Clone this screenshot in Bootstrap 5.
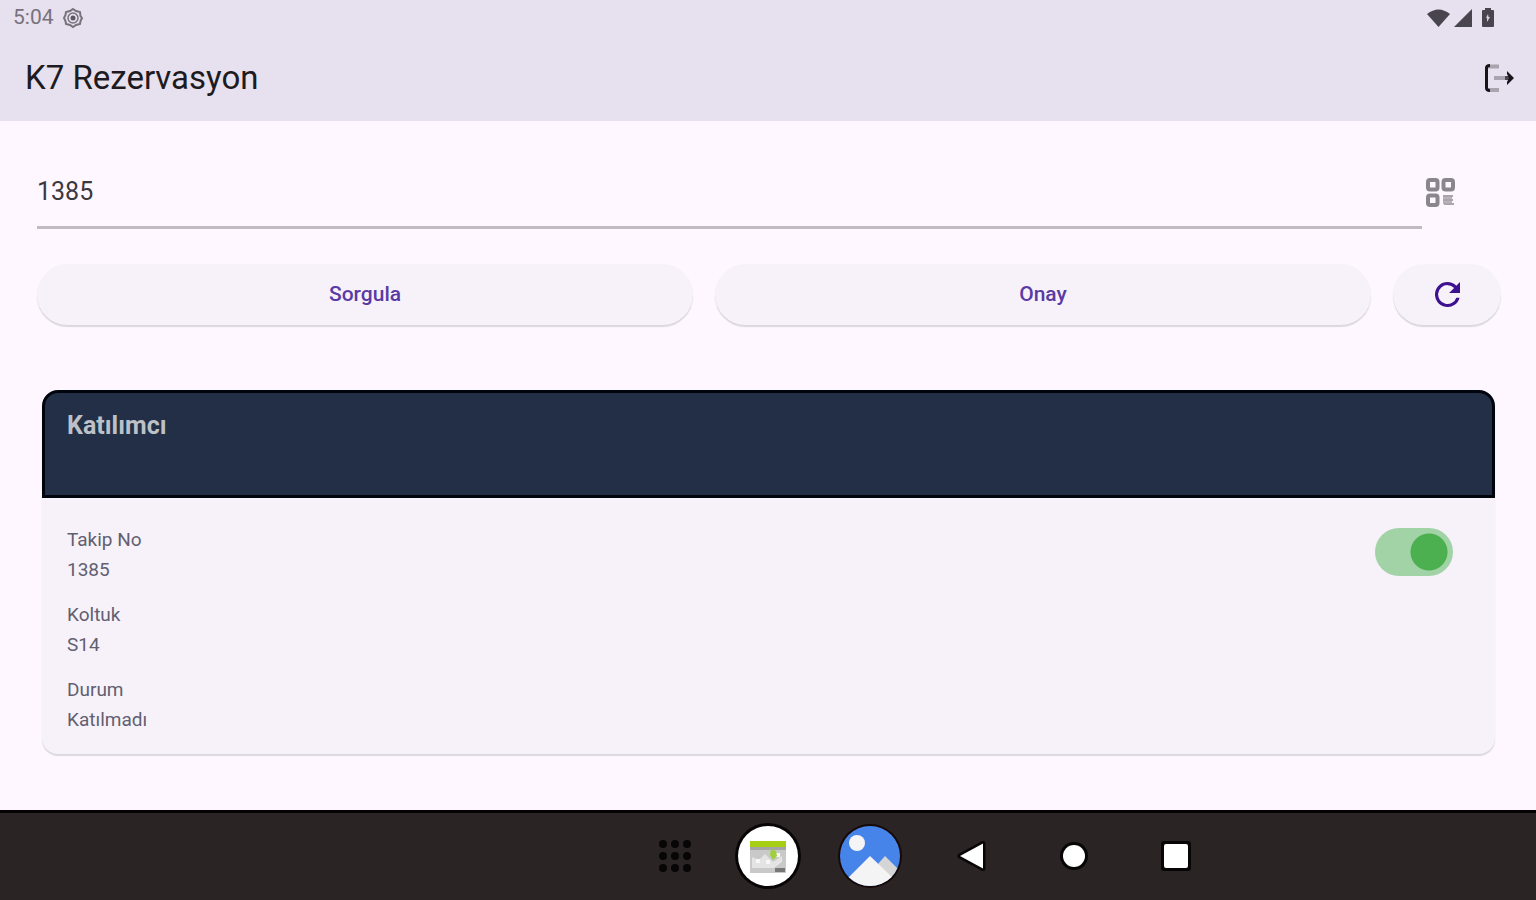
<!DOCTYPE html>
<html lang="tr">
<head>
<meta charset="utf-8">
<meta name="viewport" content="width=device-width, initial-scale=1">
<title>K7 Rezervasyon</title>
<link rel="stylesheet" href="https://cdn.jsdelivr.net/npm/bootstrap@5.3.0/dist/css/bootstrap.min.css">
<style>
  body { font-family: Roboto, "Liberation Sans", sans-serif; background: #fef7ff; color: #1d1b20; }
  svg { display: block; flex: none; }
  .top-area { background: #e7e0ee; }
  .status-row { height: 36px; padding: 0 40px 0 13px; font-size: 21px; color: #77727c; }
  .title-row { height: 85px; padding: 0 21px 2px 25px; }
  .title-row h1 { font-size: 33px; line-height: 40px; font-weight: 400; }
  .content-area { padding: 48px 35px 40px 37px; }
  .query-row { padding-right: 46px; }
  .query-input { height: 60px; padding: 0 0 12px; border: 0; border-bottom: 3px solid #c0bac1; background: transparent; font-size: 25px; color: #3b383e; outline: 0; }
  .action-row { gap: 22px; margin-top: 35px; }
  .action-btn { height: 61px; border: 0; border-radius: 31px; background: #f7f2fa; color: #5a3aa5; font-size: 21px; font-weight: 500; box-shadow: 0 2px 1px #dcd6df; --bs-btn-hover-bg: #f0eaf6; }
  .refresh-btn { width: 108px; }
  .guest-card { margin: 65px 6px 0 5px; border: 0; border-radius: 16px; background: #f7f2fa; box-shadow: 0 2px 1px #dcd8df; }
  .guest-head { height: 108px; padding: 18px 22px; background: #222f46; border: 3px solid #00040c; border-radius: 16px 16px 0 0; }
  .guest-head h2 { font-size: 25px; line-height: 30px; font-weight: 700; color: #bcc1c8; }
  .guest-body { padding: 27px 42px 19px 25px; }
  .guest-body dl { display: grid; gap: 15px; font-size: 19px; line-height: 30px; color: #625f70; }
  .guest-body dt { font-weight: 400; }
  .form-check-input.guest-switch { appearance: none; width: 78px; height: 48px; margin: 3px 0 0; border: 0; border-radius: 24px; background-color: #a1d3a6; background-image: radial-gradient(circle at center, #4caf50 18px, transparent 19px); background-size: 44px 44px; background-repeat: no-repeat; background-position: 32px center; }
  .form-check-input.guest-switch:not(:checked) { background-position: 2px center; background-color: #d5d1d8; }
  .system-bar { display: grid; grid-template-columns: 1fr 102px 1fr; height: 90px; padding-bottom: 2px; border-top: 3px solid #050304; background: #2a2425; }
  .system-bar .btn { display: flex; align-items: center; justify-content: center; width: 102px; padding: 0; border: 0; }
  .system-bar .drawer-btn { width: 84px; }
</style>
</head>
<body class="d-flex flex-column min-vh-100">
<header class="top-area">
  <div class="status-row d-flex align-items-center justify-content-between">
    <div class="d-flex align-items-center gap-2">
      <span>5:04</span>
      <svg width="22" height="22" viewBox="0 0 22 22" fill="none" stroke="#77727c"><path d="M11 2 14 4 18 5 18.500 9 20 11 18.500 14 18 17 14 18 11 20 8 18 4 17 3.500 14 2 11 3.500 8 4 5 8 4Z" stroke-width="2"/><circle cx="11" cy="11" r="5" stroke-width="1.500"/><circle cx="11" cy="11" r="2.500" fill="#5c5861" stroke="none"/></svg>
    </div>
    <div class="d-flex align-items-center gap-1" aria-hidden="true">
      <svg width="23" height="20" viewBox="0 0 23 20" fill="#49454e"><path d="M0 6Q11.500-3 23 6L11.500 19Z"/></svg>
      <svg width="18" height="20" viewBox="0 0 18 20" fill="#49454e"><path d="M0 19H18V1Z"/></svg>
      <svg class="ms-1" width="16" height="20" viewBox="0 0 16 20"><path fill="#49454e" d="M5 0h6v2h2q1 0 1 1v15q0 1-1 1H3q-1 0-1-1V3q0-1 1-1h2Z"/><path fill="#d7d0dd" d="m8 6-2 4h1v4l3-5H8.500Z"/></svg>
    </div>
  </div>
  <div class="title-row d-flex align-items-center justify-content-between">
    <h1 class="m-0">K7 Rezervasyon</h1>
    <button type="button" class="btn border-0 p-0" aria-label="Çıkış">
      <svg width="32" height="30" viewBox="0 0 32 30" fill="none"><path d="M16 3.500H5M16 27H5M11 15H24" stroke="#aaa4b0" stroke-width="4"/><path d="M7 2.500Q3.500 2.500 3.500 5V25Q3.500 27.500 7 27.500" stroke="#17141a" stroke-width="3"/><path d="M22 15h5" stroke="#4b4750" stroke-width="4"/><path d="M24 8 31 15 24 22V19L26 15 24 11Z" fill="#17141a"/></svg>
    </button>
  </div>
</header>

<main class="content-area flex-grow-1">
  <form>
    <div class="query-row d-flex">
      <input class="query-input flex-grow-1 rounded-0" type="text" value="1385" aria-label="Takip No">
      <button type="button" class="btn border-0 p-0 d-flex ms-1" aria-label="QR kod tara">
        <svg class="mt-2" width="29" height="30" viewBox="0 0 29 30" fill="none" stroke="#8b868d" stroke-width="4"><rect x="2" y="3" width="9.500" height="9.500" rx="2"/><rect x="17.500" y="3" width="9.500" height="9.500" rx="2"/><rect x="2" y="18.500" width="9.500" height="9.500" rx="2"/><path d="M17 18h9v9h-9z" fill="#b8b2ba" stroke="none"/><path d="M17 19h10M17 23h10M18 27h10" stroke="#aaa5ad" stroke-width="2"/></svg>
      </button>
    </div>
    <div class="action-row d-flex">
      <button type="button" class="action-btn btn flex-fill w-50">Sorgula</button>
      <button type="button" class="action-btn btn flex-fill w-50">Onay</button>
      <button type="button" class="action-btn refresh-btn btn flex-shrink-0 d-flex align-items-center justify-content-center" aria-label="Yenile">
        <svg width="25" height="25" viewBox="4 4 16 16" fill="#3d1290"><path d="M17.650 6.350A7.960 7.960 0 0 0 12 4a8 8 0 1 0 7.730 10h-2.080A6 6 0 1 1 12 6c1.660 0 3.140.69 4.220 1.780L13 11h7V4Z"/></svg>
      </button>
    </div>
  </form>

  <section class="guest-card card">
    <div class="guest-head"><h2 class="m-0">Katılımcı</h2></div>
    <div class="guest-body d-flex justify-content-between">
      <dl class="m-0">
        <div><dt>Takip No</dt><dd class="m-0">1385</dd></div>
        <div><dt>Koltuk</dt><dd class="m-0">S14</dd></div>
        <div><dt>Durum</dt><dd class="m-0">Katılmadı</dd></div>
      </dl>
      <input class="form-check-input guest-switch" type="checkbox" role="switch" aria-label="Katılım" checked>
    </div>
  </section>
</main>

<nav class="system-bar" aria-label="Sistem">
  <div class="d-flex justify-content-end">
    <button type="button" class="drawer-btn btn" aria-label="Uygulamalar">
      <svg width="32" height="32" viewBox="0 0 32 32" fill="#080506"><circle cx="4" cy="4" r="4"/><circle cx="16" cy="4" r="4"/><circle cx="28" cy="4" r="4"/><circle cx="4" cy="16" r="4"/><circle cx="16" cy="16" r="4"/><circle cx="28" cy="16" r="4"/><circle cx="4" cy="28" r="4"/><circle cx="16" cy="28" r="4"/><circle cx="28" cy="28" r="4"/></svg>
    </button>
  </div>
  <button type="button" class="btn" aria-label="K7 Rezervasyon">
    <svg width="66" height="66" viewBox="0 0 66 66"><circle cx="33" cy="33" r="33" fill="#080506"/><circle cx="33" cy="33" r="30" fill="#fff"/><path fill="#c9c9c9" d="M15 18h36v32H15z"/><path fill="#a6ce12" d="M15 18h36v6H15z"/><path fill="#a5a5a5" d="M15 24h36v3H15z"/><path fill="#e4e4e4" d="M17 34l7 3 6-6 8 8 9-6v6l-8 6H17z"/><path fill="#f7f7f7" d="M21 36h4v4h-4zM31 37h4v4h-4zM41 30h4v4h-4z"/><path fill="#a0cf3c" d="M36 26l5 2 1 5-4 4-3-5z"/><path fill="#777" d="M40 45h10v4H40z"/></svg>
  </button>
  <div class="d-flex">
    <button type="button" class="btn" aria-label="Galeri">
      <svg width="66" height="66" viewBox="0 0 66 66"><defs><clipPath id="disc"><circle cx="33" cy="33" r="30"/></clipPath></defs><circle cx="33" cy="33" r="32" fill="#160a08"/><g clip-path="url(#disc)"><path fill="#4784ea" d="M0 0h66v66H0z"/><circle cx="20" cy="20" r="8" fill="#f5f5f5"/><path fill="#d5d5d5" d="m41 41 7-8 16 16v9H48z"/><path fill="#f4f4f4" d="M9 57 33 33 55 54v12H9z"/></g></svg>
    </button>
    <button type="button" class="btn" aria-label="Geri">
      <svg width="32" height="32" viewBox="0 0 32 32" fill="#fff" stroke="#080506" stroke-width="5" paint-order="stroke" stroke-linejoin="round"><path d="M4 16 27 3.500V28.500Z"/></svg>
    </button>
    <button type="button" class="btn" aria-label="Ana ekran">
      <svg width="30" height="30" viewBox="0 0 30 30"><circle cx="15" cy="15" r="14" fill="#080506"/><circle cx="15" cy="15" r="11" fill="#fff"/></svg>
    </button>
    <button type="button" class="btn" aria-label="Son uygulamalar">
      <svg width="30" height="30" viewBox="0 0 30 30"><rect width="30" height="30" rx="3" fill="#080506"/><rect x="3" y="3" width="24" height="24" rx="2" fill="#fff"/></svg>
    </button>
  </div>
</nav>
<script src="https://cdn.jsdelivr.net/npm/bootstrap@5.3.0/dist/js/bootstrap.bundle.min.js"></script>
</body>
</html>
